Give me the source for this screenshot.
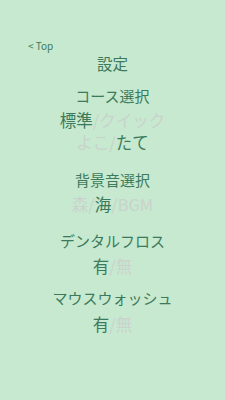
import React from "react";

const G = "text-[#3d7a5c]";
const L = "text-[#cad2cd]";

function Row({ children, className = "" }: { children: React.ReactNode; className?: string }) {
  return <div className={`text-center leading-[22px] h-[22px] ${className}`}>{children}</div>;
}

export default function App() {
  return (
    <div
      className={`w-[225px] h-[400px] bg-[#c6e9cf] pt-[40px] ${G}`}
      style={{ fontFamily: '"Noto Sans CJK JP", "Noto Sans", sans-serif' }}
    >
      <div className="pl-[28px] text-[10px] leading-[12px] h-[12px]">&lt; Top</div>
      <Row className="text-[15.5px]">設定</Row>
      <Row className="mt-[11px] text-[15px]">コース選択</Row>
      <Row className="mt-[2px] text-[16.5px]">
        <span>標準</span>
        <span className={L}>/クイック</span>
      </Row>
      <Row className="text-[16.5px]">
        <span className={L}>よこ/</span>
        <span>たて</span>
      </Row>
      <Row className="mt-[16px] text-[15px]">背景音選択</Row>
      <Row className="mt-[2px] text-[16.5px]">
        <span className={L}>森/</span>
        <span>海</span>
        <span className={L}>/BGM</span>
      </Row>
      <Row className="mt-[15px] text-[15px]">デンタルフロス</Row>
      <Row className="mt-[3px] text-[16.5px]">
        <span>有</span>
        <span className={L}>/無</span>
      </Row>
      <Row className="mt-[10px] text-[15px]">マウスウォッシュ</Row>
      <Row className="mt-[4px] text-[16.5px]">
        <span>有</span>
        <span className={L}>/無</span>
      </Row>
    </div>
  );
}
